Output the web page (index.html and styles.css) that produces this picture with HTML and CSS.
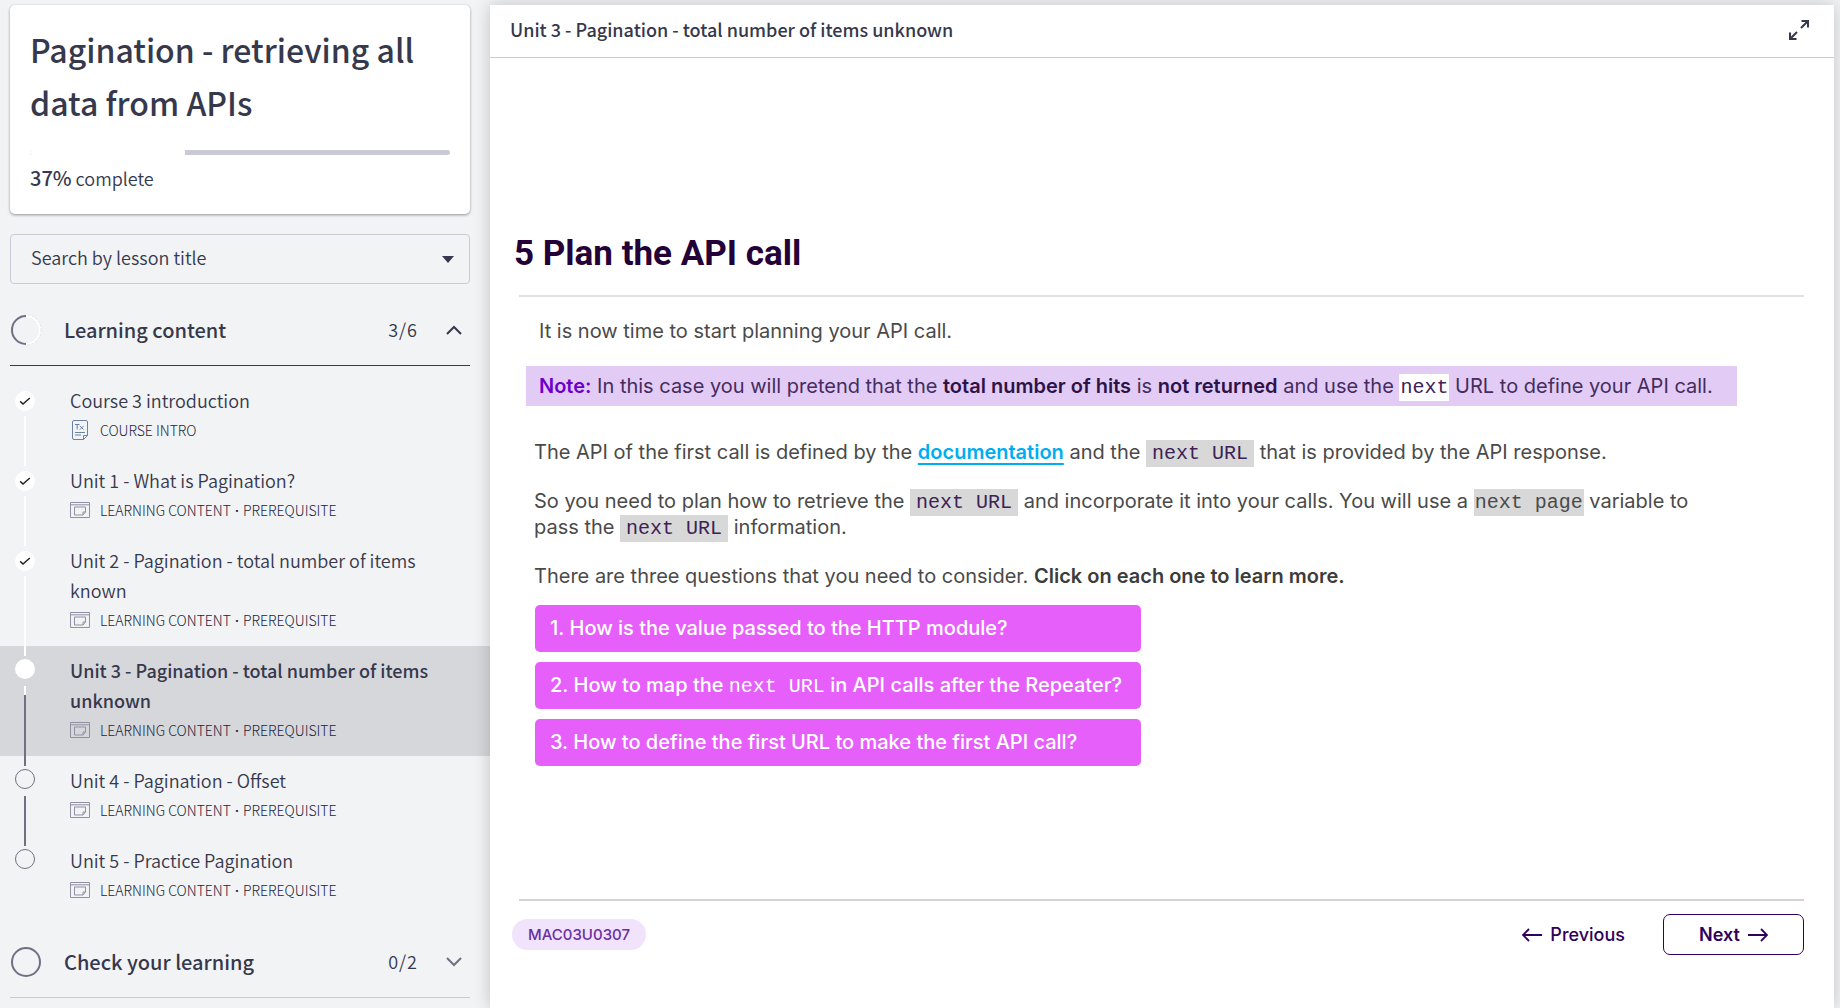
FILE: index.html
```html
<!DOCTYPE html>
<html lang="en">
<head>
<meta charset="utf-8">
<title>Pagination - retrieving all data from APIs</title>
<link rel="stylesheet" href="styles.css">
</head>
<body>
<svg class="sprite" aria-hidden="true">
  <symbol id="page-icon" viewBox="0 0 20 16">
    <path d="M.5.5h19v15H.5zM.5 2.800h19M4.500 5h11v5l-2.500 3h-8.500zM15.500 10h-2.500v3" fill="none" stroke="currentColor"/>
  </symbol>
  <symbol id="check-icon" viewBox="0 0 20 20">
    <path d="M5.200 10.400l2.800 2.600 6.800-6" fill="none" stroke="currentColor" stroke-width="1.500"/>
  </symbol>
</svg>
<div class="layout">
  <aside class="sidebar">
    <section class="course-card">
      <h1 class="course-title">Pagination - retrieving all data from APIs</h1>
      <div class="progress" role="progressbar" aria-valuenow="37" aria-valuemin="0" aria-valuemax="100" aria-label="Course progress">
        <div class="progress-fill" style="width: 37%"></div>
      </div>
      <p class="progress-text"><strong>37%</strong> complete</p>
    </section>

    <div class="search">
      <select id="lesson" class="search-select" aria-label="Lesson"><option>Search by lesson title</option></select>
    </div>

    <button class="section-head open" type="button" aria-expanded="true">
      <svg class="ring" viewBox="0 0 32 32"><circle cx="16" cy="16" r="14" fill="none" stroke="#fff" stroke-width="2"/><circle cx="16" cy="16" r="15" fill="none" stroke="#c9cad6" stroke-width=".5" stroke-dasharray="2 2"/><path d="M16 2a14 14 0 0 0 0 28" fill="none" stroke="#6e7184" stroke-width="2"/></svg>
      <span class="section-name">Learning content</span>
      <span class="section-count">3/6</span>
      <svg class="chevron" viewBox="0 0 16 16"><path d="M1 12l7-7 7 7" fill="none" stroke="currentColor" stroke-width="2"/></svg>
    </button>

    <ol class="lessons">
      <li class="lesson done">
        <div class="track"><span class="dot"><svg class="check"><use href="#check-icon"/></svg></span><span class="line"></span></div>
        <a class="lesson-link" href="#intro">
          <span class="lesson-title">Course 3 introduction</span>
          <span class="meta"><svg class="meta-icon" viewBox="0 0 20 20"><path d="M4 .5h12a1.500 1.500 0 0 1 1.500 1.500v13.500l-4 4h-9.500a1.500 1.500 0 0 1-1.500-1.500v-16a1.500 1.500 0 0 1 1.500-1.500zM17.500 15.500h-4v4M5 12.500h10M5 15h6M5 4.500h4.500M7.200 4.500v5M10 6l3.500 3.500M13.500 6l-3.500 3.500" fill="none" stroke="#6c83a0"/></svg>COURSE INTRO</span>
        </a>
      </li>
      <li class="lesson done">
        <div class="track"><span class="dot"><svg class="check"><use href="#check-icon"/></svg></span><span class="line"></span></div>
        <a class="lesson-link" href="#unit1">
          <span class="lesson-title">Unit 1 - What is Pagination?</span>
          <span class="meta"><svg class="meta-icon"><use href="#page-icon"/></svg><span>LEARNING CONTENT <span class="sep">·</span> PREREQUISITE</span></span>
        </a>
      </li>
      <li class="lesson done">
        <div class="track"><span class="dot"><svg class="check"><use href="#check-icon"/></svg></span><span class="line"></span></div>
        <a class="lesson-link" href="#unit2">
          <span class="lesson-title">Unit 2 - Pagination - total number of items known</span>
          <span class="meta"><svg class="meta-icon"><use href="#page-icon"/></svg><span>LEARNING CONTENT <span class="sep">·</span> PREREQUISITE</span></span>
        </a>
      </li>
      <li class="lesson current" aria-current="true">
        <div class="track"><span class="dot"></span><span class="line"></span></div>
        <a class="lesson-link" href="#unit3">
          <span class="lesson-title">Unit 3 - Pagination - total number of items unknown</span>
          <span class="meta"><svg class="meta-icon"><use href="#page-icon"/></svg><span>LEARNING CONTENT <span class="sep">·</span> PREREQUISITE</span></span>
        </a>
      </li>
      <li class="lesson">
        <div class="track"><span class="dot"></span><span class="line"></span></div>
        <a class="lesson-link" href="#unit4">
          <span class="lesson-title">Unit 4 - Pagination - Offset</span>
          <span class="meta"><svg class="meta-icon"><use href="#page-icon"/></svg><span>LEARNING CONTENT <span class="sep">·</span> PREREQUISITE</span></span>
        </a>
      </li>
      <li class="lesson">
        <div class="track"><span class="dot"></span></div>
        <a class="lesson-link" href="#unit5">
          <span class="lesson-title">Unit 5 - Practice Pagination</span>
          <span class="meta"><svg class="meta-icon"><use href="#page-icon"/></svg><span>LEARNING CONTENT <span class="sep">·</span> PREREQUISITE</span></span>
        </a>
      </li>
    </ol>

    <button class="section-head" type="button" aria-expanded="false">
      <svg class="ring" viewBox="0 0 32 32"><circle cx="16" cy="16" r="14" fill="none" stroke="#6e7184" stroke-width="2"/></svg>
      <span class="section-name">Check your learning</span>
      <span class="section-count">0/2</span>
      <svg class="chevron" viewBox="0 0 16 16"><path d="M1 4l7 7 7-7" fill="none" stroke="currentColor" stroke-width="2"/></svg>
    </button>
  </aside>

  <main class="viewer">
    <header class="viewer-head">
      <h2 class="viewer-title">Unit 3 - Pagination - total number of items unknown</h2>
      <button class="expand" type="button" aria-label="Full screen">
        <svg class="expand-icon" viewBox="0 0 20 20"><path d="M12 8l7-7M12.500 1h6.500v6.500M8 12l-7 7M7.500 19h-6.500v-6.500" fill="none" stroke="currentColor" stroke-width="2"/></svg>
      </button>
    </header>

    <article class="slide">
      <h3 class="slide-title">5 Plan the API call</h3>
      <div class="slide-body">
        <p class="intro">It is now time to start planning your API call.</p>
        <p class="note"><b class="note-label">Note:</b> In this case you will pretend that the <b>total number of hits</b> is <b>not returned</b> and use the <code class="code white">next</code> URL to define your API call.</p>
        <div class="text">
          <p class="para">The API of the first call is defined by the <a class="doc-link" href="#docs">documentation</a> and the <code class="code wide">next URL</code> that is provided by the API response.</p>
          <p class="para">So you need to plan how to retrieve the <code class="code wide">next URL</code> and incorporate it into your calls. You will use a <code class="code">next page</code> variable to pass the <code class="code wide">next URL</code> information.</p>
          <p class="para">There are three questions that you need to consider. <b>Click on each one to learn more.</b></p>
          <div class="questions">
            <button class="question" type="button">1. How is the value passed to the HTTP module?</button>
            <button class="question" type="button">2. How to map the <code class="plain-code">next URL</code> in API calls after the Repeater?</button>
            <button class="question" type="button">3. How to define the first URL to make the first API call?</button>
          </div>
        </div>
      </div>
      <footer class="slide-foot">
        <span class="tag">MAC03U0307</span>
        <button class="nav prev" type="button"><svg class="arrow" viewBox="0 0 20 14"><path d="M20 7h-19M7 1l-6 6 6 6" fill="none" stroke="currentColor" stroke-width="1.800"/></svg>Previous</button>
        <button class="nav next" type="button">Next<svg class="arrow" viewBox="0 0 20 14"><path d="M0 7h19M13 1l6 6-6 6" fill="none" stroke="currentColor" stroke-width="1.800"/></svg></button>
      </footer>
    </article>
  </main>
</div>
</body>
</html>
```

FILE: styles.css
```css
* { box-sizing: border-box; }
body {
  margin: 0;
  background: #f2f3f5;
  color: #36384c;
  font-family: "Noto Sans CJK SC", "Open Sans", sans-serif;
  font-size: 18px;
  font-weight: 350;
}
h1, h2, h3, p, ol { margin: 0; padding: 0; }
button, select { font: inherit; color: inherit; }
a { color: inherit; text-decoration: none; }
.sprite { display: none; }

.layout { display: flex; min-height: 100vh; padding-right: 6px; padding-top: 5px; }

/* Sidebar */
.sidebar { flex: 0 0 490px; display: flex; flex-direction: column; }
.course-card {
  margin: 0 20px 20px 10px;
  padding: 18px 20px 21px;
  border-radius: 5px;
  background: #fff;
  box-shadow: 0 1px 3px rgba(0, 0, 0, .4);
}
.course-title { font-size: 32px; line-height: 53px; font-weight: 500; }
.progress { height: 5px; margin: 21px 0 8px; border-radius: 3px; background: #c9cad6; overflow: hidden; }
.progress-fill { height: 5px; background: #fff; }
.progress-text { line-height: 30px; }
.progress-text strong { font-size: 20px; line-height: 20px; font-weight: 500; }

.search { display: grid; align-items: center; margin: 0 20px 11px 10px; }
.search::after {
  content: "";
  grid-area: 1 / 1;
  justify-self: end;
  margin-right: 16px;
  border: 6px solid transparent;
  border-top: 7px solid #36384c;
  border-bottom: 0;
  pointer-events: none;
}
.search-select {
  grid-area: 1 / 1;
  height: 50px;
  padding: 0 20px 4px;
  border: 1px solid #c9cad6;
  border-radius: 4px;
  background: transparent;
  appearance: none;
}

.section-head {
  display: flex;
  align-items: center;
  height: 71px;
  margin: 11px 20px 0 10px;
  padding: 0 8px 0 0;
  border: 0;
  border-bottom: 1px solid #c9cad6;
  background: none;
  text-align: left;
}
.section-head.open { margin-top: 0; border-color: #36384c; }
.ring { width: 32px; height: 32px; margin-right: 22px; }
.section-name { flex: 1; padding-bottom: 2px; font-size: 20px; font-weight: 500; }
.section-count { padding-bottom: 2px; margin-right: 28px; letter-spacing: 1px; }
.chevron { width: 16px; height: 16px; color: #6e7184; }
.open .chevron { color: #36384c; }

.lessons { list-style: none; padding-top: 10px; }
.lesson { display: flex; min-height: 80px; }
.track { display: flex; flex-direction: column; align-items: center; width: 50px; padding-top: 13px; }
.dot { width: 20px; height: 20px; border: 1px solid #6e7184; border-radius: 50%; }
.line { flex: 1; width: 2px; margin: 7px 0 -10px; background: #6e7184; }
.done .track { padding-top: 15px; }
.done .line { margin-top: 5px; }
.done .line { background: #fff; }
.done .dot, .current .dot { border: 0; background: #fff; }
.current .line { border-top: 9px solid #fff; }
.check { display: block; width: 20px; height: 20px; color: #222; }
.lesson-link { flex: 1; padding: 9px 50px 11px 20px; }
.lesson-title { display: block; line-height: 30px; }
.meta { display: flex; align-items: center; gap: 10px; line-height: 30px; font-size: 14px; font-weight: 300; color: #22243a; }
.meta-icon { width: 20px; height: 20px; color: #8f91a3; }
.sep { margin: 0 1px; font-family: "Open Sans", sans-serif; line-height: 20px; font-weight: 600; }
.current { background: #d6d7db; }
.current .lesson-title { font-weight: 500; }

/* Lesson viewer */
.viewer {
  position: relative;
  flex: 1;
  min-width: 0;
  background: #fff;
  box-shadow: 0 0 16px rgba(0, 0, 0, .2);
}
.viewer-head {
  display: flex;
  align-items: center;
  justify-content: space-between;
  height: 53px;
  padding: 0 25px 2px 20px;
  border-bottom: 1px solid #c9cad6;
}
.viewer-title { padding-bottom: 2px; font-size: 18px; font-weight: 500; }
.expand { padding: 0; border: 0; background: none; }
.expand-icon { display: block; width: 20px; height: 20px; }

.slide { padding: 171px 30px 51px 22px; font-family: Inter, "Liberation Sans", sans-serif; }
.slide-title {
  margin-left: 2px;
  line-height: 50px;
  font-family: Roboto, Inter, sans-serif;
  font-size: 35px;
  font-weight: 700;
  color: #230038;
}
.slide-body {
  margin-top: 16px;
  margin-left: 7px;
  min-height: 606px;
  padding: 21px 0 0 7px;
  border-top: 2px solid #e4dfe0;
  border-bottom: 2px solid #d9d0d6;
  font-size: 20px;
  line-height: 26px;
  font-weight: 400;
  color: #4a4a4a;
}
.slide-body b { font-weight: 600; color: #3c3c3c; }
.intro { padding-left: 13px; }
.note {
  width: fit-content;
  margin: 22px 0 33px;
  padding: 7px 24px 7px 13px;
  background: #e2ccf5;
  color: #452b5e;
}
.note b { color: #2f1249; }
.note .note-label { color: #6d00cc; }
.text { max-width: 1180px; padding-left: 8px; }
.para { margin-bottom: 23px; }
.code { padding: 2px 1px; background: #d8d8d8; font: 20px/20px "Liberation Mono", monospace; }
.wide { padding: 2px 6px; color: #3c2257; }
.white { background: #fff; color: #3c2257; }
.doc-link { color: #00aeef; font-weight: 600; text-decoration: underline; text-decoration-thickness: 2px; text-underline-offset: 4px; }
.questions { display: grid; gap: 10px; width: 606px; margin: -7px 0 0 1px; }
.question {
  height: 47px;
  padding: 0 15px 2px;
  border: 0;
  border-radius: 5px;
  background: #e65ffa;
  color: #fff;
  text-align: left;
  font-weight: 500;
}
.plain-code { font: 20px/20px "Liberation Mono", monospace; }

.slide-foot {
  display: flex;
  align-items: center;
  padding-top: 13px;
  color: #2f005c;
}
.tag { padding: 0 16px; border-radius: 16px; line-height: 31px; background: #f0e3fb; color: #6b2fa0; font-size: 15px; font-weight: 500; }
.nav { display: flex; align-items: center; gap: 8px; border: 0; background: none; font-weight: 500; }
.prev { margin-left: auto; margin-right: 32px; }
.next { justify-content: center; width: 141px; height: 41px; border: 1px solid #2f005c; border-radius: 7px; font-weight: 600; }
.arrow { width: 20px; height: 14px; }
```
